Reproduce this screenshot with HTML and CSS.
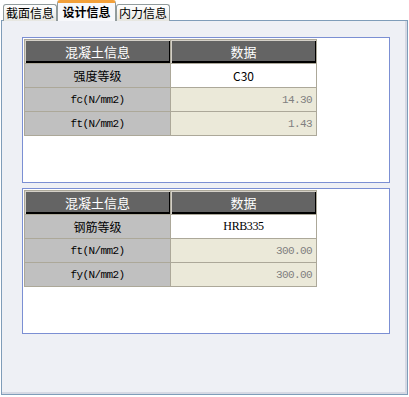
FILE: index.html
```html
<!DOCTYPE html>
<html lang="zh-CN">
<head>
  <meta charset="UTF-8" />
  <title>设计信息</title>
  <link rel="stylesheet" href="styles.css">
</head>
<body>
  <!-- Tab strip -->
  <div class="tabs">
    <div class="tab">截面信息</div>
    <div class="tab active">设计信息</div>
    <div class="tab">内力信息</div>
  </div>

  <div class="panel">
    <!-- Concrete -->
    <div class="group">
      <table class="grid">
        <tr>
          <th>混凝土信息</th>
          <th>数据</th>
        </tr>
        <tr>
          <td class="label">强度等级</td>
          <td class="value edit">C30</td>
        </tr>
        <tr>
          <td class="label mono">fc(N/mm2)</td>
          <td class="value mono">14.30</td>
        </tr>
        <tr>
          <td class="label mono">ft(N/mm2)</td>
          <td class="value mono">1.43</td>
        </tr>
      </table>
    </div>

    <!-- Rebar -->
    <div class="group">
      <table class="grid">
        <tr>
          <th>混凝土信息</th>
          <th>数据</th>
        </tr>
        <tr>
          <td class="label">钢筋等级</td>
          <td class="value edit serif">HRB335</td>
        </tr>
        <tr>
          <td class="label mono">ft(N/mm2)</td>
          <td class="value mono">300.00</td>
        </tr>
        <tr>
          <td class="label mono">fy(N/mm2)</td>
          <td class="value mono">300.00</td>
        </tr>
      </table>
    </div>
  </div>
</body>
</html>
```

FILE: styles.css
```css
* {
  margin: 0;
  padding: 0;
  box-sizing: border-box;
}
body {
  width: 409px;
  height: 397px;
  background: #fff;
  font-family: "Noto Sans CJK SC", "Liberation Sans", sans-serif;
  font-size: 12px;
  color: #000;
  overflow: hidden;
}
/* Tabs */
.tabs {
  display: flex;
  align-items: flex-end;
  height: 21px;
  padding-left: 3px;
  margin-bottom: -1px;
  position: relative;
  z-index: 1;
}
.tab {
  width: 54px;
  height: 17px;
  line-height: 15px;
  text-align: center;
  border: 1px solid #919b9c;
  border-bottom: none;
  border-radius: 3px 3px 0 0;
  background: linear-gradient(#ffffff, #e6e6e0);
  font-size: 12px;
}
.tab.active {
  width: 59px;
  height: 21px;
  line-height: 18px;
  font-weight: bold;
  border-top: 3px solid #f2a03a;
  background: #f7f8fb;
}
/* Panel */
.panel {
  margin-left: 1px;
  width: 407px;
  height: 375px;
  border: 1px solid #7f9db9;
  background: #eef0f5;
  box-shadow: inset -2px -2px 0 #d6d9e4;
  padding: 16px 0 0 20px;
}
.group {
  width: 368px;
  height: 146px;
  border: 1px solid #7b8fd3;
  background: #fff;
  padding: 1px;
  margin-bottom: 5px;
}
/* Grid table */
.grid {
  border-collapse: collapse;
  width: 293px;
}
.grid th,
.grid td {
  width: 146px;
  height: 24px;
  border: 1px solid #aca899;
  padding: 0 4px;
}
.grid th {
  background: #646464;
  color: #fff;
  font-weight: normal;
  font-size: 13px;
  box-shadow: inset 1px 1px 0 #d4d0c8, inset -1px -2px 0 #000;
}
.label {
  background: #c0c0c0;
  text-align: center;
}
.value {
  background: #ebe9d9;
  color: #808080;
  text-align: right;
}
.value.edit {
  background: #fff;
  color: #000;
  text-align: center;
}
.mono {
  font-family: "Liberation Mono", monospace;
  font-size: 11px;
  letter-spacing: -0.6px;
}
.serif {
  font-family: "Liberation Serif", serif;
  font-size: 12px;
  letter-spacing: -0.4px;
}
```
